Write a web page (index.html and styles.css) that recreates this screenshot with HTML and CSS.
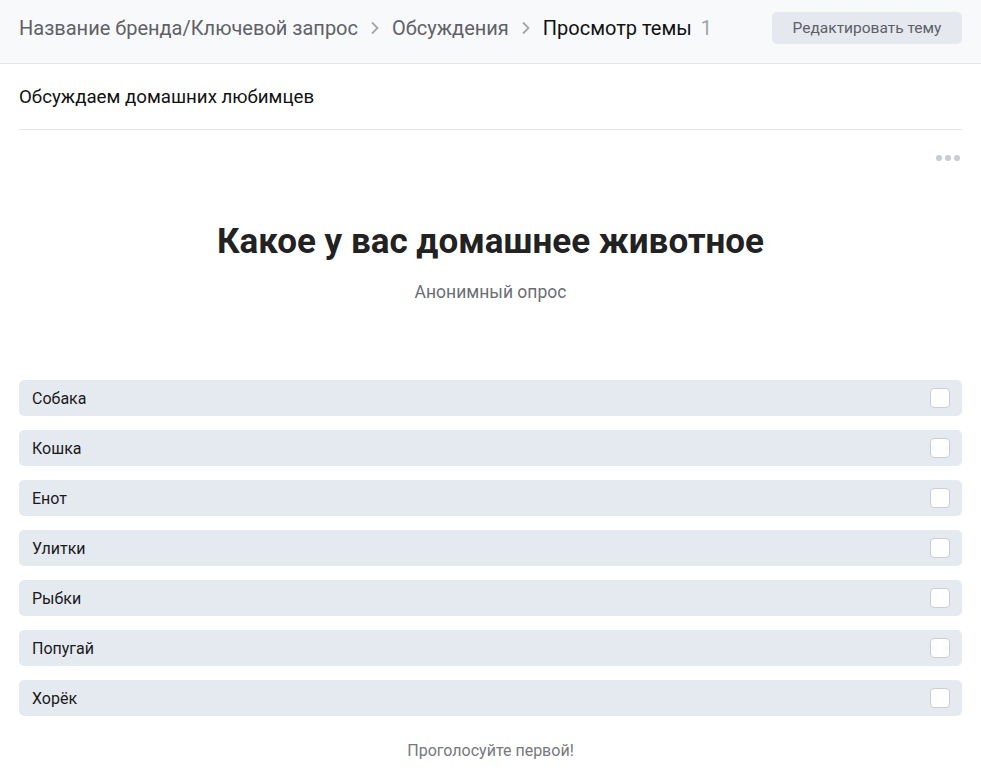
FILE: index.html
```html
<!DOCTYPE html>
<html lang="ru">
<head>
    <meta charset="UTF-8">
    <title>Просмотр темы</title>
    <link rel="stylesheet" href="styles.css">
</head>
<body>
    <div class="topbar">
        <div class="crumbs">
            <span class="crumb">Название бренда/Ключевой запрос</span>
            <svg class="chev" width="10" height="14" viewBox="0 0 10 14"><path d="M2 1.5 L7.5 7 L2 12.5" fill="none" stroke="#a3a6ab" stroke-width="1.8"/></svg>
            <span class="crumb">Обсуждения</span>
            <svg class="chev" width="10" height="14" viewBox="0 0 10 14"><path d="M2 1.5 L7.5 7 L2 12.5" fill="none" stroke="#a3a6ab" stroke-width="1.8"/></svg>
            <span class="crumb current">Просмотр темы</span>
            <span class="count">1</span>
        </div>
        <button class="btn">Редактировать тему</button>
    </div>

    <div class="content">
        <div class="topic">Обсуждаем домашних любимцев</div>

        <div class="more">
            <span></span><span></span><span></span>
        </div>

        <h1 class="poll-title">Какое у вас домашнее животное</h1>
        <div class="poll-sub">Анонимный опрос</div>

        <div class="options">
            <label class="option"><span>Собака</span><i class="check"></i></label>
            <label class="option"><span>Кошка</span><i class="check"></i></label>
            <label class="option"><span>Енот</span><i class="check"></i></label>
            <label class="option"><span>Улитки</span><i class="check"></i></label>
            <label class="option"><span>Рыбки</span><i class="check"></i></label>
            <label class="option"><span>Попугай</span><i class="check"></i></label>
            <label class="option"><span>Хорёк</span><i class="check"></i></label>
        </div>

        <div class="vote-first">Проголосуйте первой!</div>
    </div>
</body>
</html>
```

FILE: styles.css
```css
body {
    margin: 0;
    font-family: Roboto, "Liberation Sans", sans-serif;
    background-color: #fff;
    color: #222;
}

.topbar {
    height: 51px;
    background-color: #f8f9fb;
    border-bottom: 1px solid #e4e6ea;
    display: flex;
    align-items: flex-start;
    justify-content: space-between;
    padding: 12px 19px 0;
}

.crumbs {
    display: flex;
    align-items: center;
    height: 32px;
    font-size: 20px;
    color: #5f6166;
}

.chev {
    margin: 0 12px 0 12px;
}

.crumb.current {
    color: #111;
}

.count {
    margin-left: 9px;
    color: #a0a3a8;
}

.btn {
    font-family: inherit;
    font-size: 15.5px;
    color: #5c6068;
    background-color: #e5e8ef;
    border: none;
    border-radius: 5px;
    height: 32px;
    width: 190px;
    cursor: pointer;
}

.content {
    padding: 0 19px;
}

.topic {
    font-size: 18.7px;
    color: #111;
    height: 65px;
    line-height: 66px;
    border-bottom: 1px solid #e4e6ea;
}

.more {
    display: flex;
    justify-content: flex-end;
    gap: 3px;
    padding: 25px 2px 0 0;
}

.more span {
    width: 6px;
    height: 6px;
    border-radius: 50%;
    background-color: #c5ccd6;
}

.poll-title {
    margin: 60px 0 0;
    text-align: center;
    font-size: 35px;
    font-weight: 700;
    color: #222;
    line-height: 42px;
}

.poll-sub {
    margin-top: 19px;
    text-align: center;
    font-size: 17.5px;
    color: #6b6e73;
}

.options {
    margin-top: 78px;
    display: flex;
    flex-direction: column;
    gap: 14px;
}

.option {
    height: 36px;
    background-color: #e5e9f0;
    border-radius: 5px;
    display: flex;
    align-items: center;
    justify-content: space-between;
    padding: 0 12px 0 13px;
    font-size: 16px;
    color: #1a1a1a;
}

.check {
    width: 18px;
    height: 18px;
    background-color: #fff;
    border: 1px solid #c9cdd3;
    border-radius: 4px;
}

.vote-first {
    margin-top: 25px;
    text-align: center;
    font-size: 16px;
    color: #76787c;
}
```
